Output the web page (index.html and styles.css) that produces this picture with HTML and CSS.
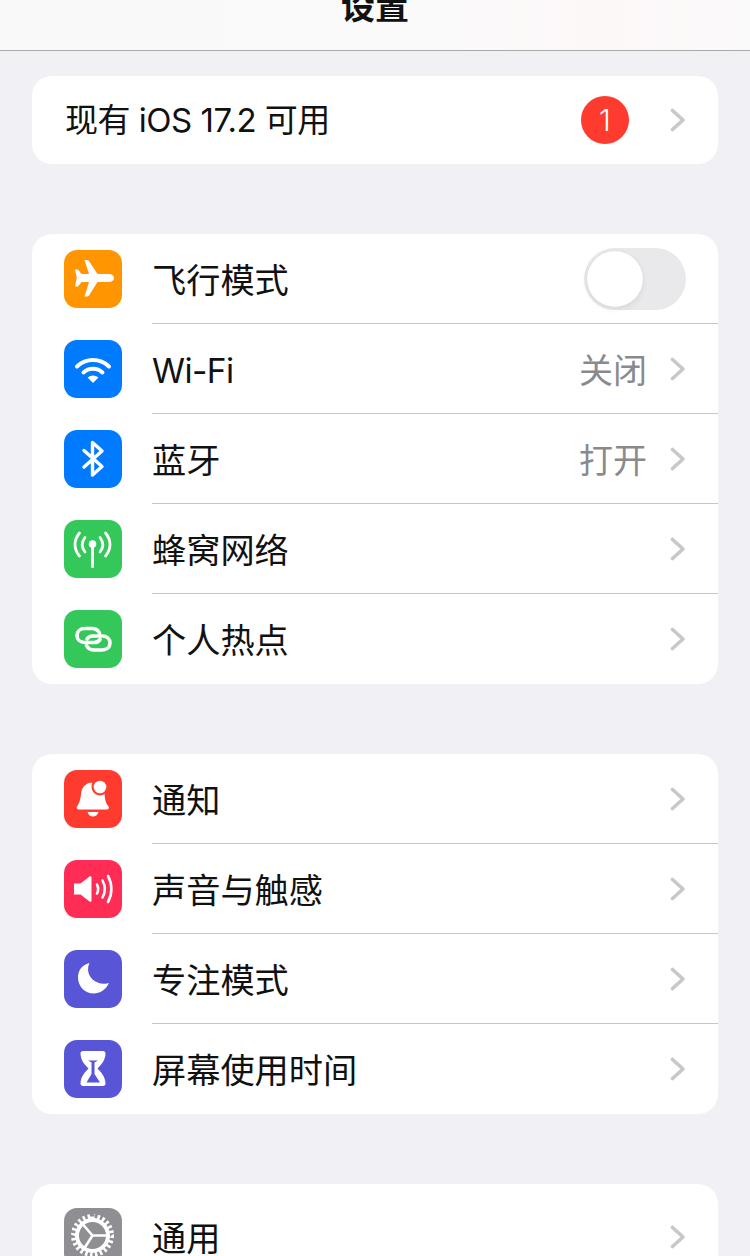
FILE: index.html
```html
<!DOCTYPE html>
<html lang="zh-CN">
<head>
<meta charset="utf-8">
<title>设置</title>
<link rel="stylesheet" href="styles.css">
</head>
<body>
<svg class="sprite" width="0" height="0" aria-hidden="true">
  <symbol id="chev" viewBox="0 0 16 24"><path d="M2.5 2.5 L13 12 L2.5 21.5" fill="none" stroke="currentColor" stroke-width="3.6" stroke-linecap="round" stroke-linejoin="round"/></symbol>
</svg>
<header class="nav"><h1 class="nav-title">设置</h1></header>
<main class="list">
  <section class="group">
    <div class="row row-update">
      <span class="label label-update">现有 iOS 17.2 可用</span>
      <span class="badge">1</span>
      <svg class="chev"><use href="#chev"/></svg>
    </div>
  </section>

  <section class="group">
    <div class="row">
      <span class="icon orange"><svg viewBox="0 0 58 58"><path fill="#fff" d="M45 24H33.500L25 11Q24.300 10 23 10H20.500L25 24H17.500L14 19.500H11L12.800 28L11 36.500H14L17.500 32H25L20.500 46.500H23Q24.300 46.500 25 45.500L33.500 32H45C48 32 50 30 50 28S48 24 45 24Z"/></svg></span>
      <div class="row-body"><span class="label">飞行模式</span><span class="switch"><span class="knob"></span></span></div>
    </div>
    <div class="row">
      <span class="icon blue"><svg viewBox="0 0 58 58"><g fill="none" stroke="#fff" stroke-width="4" stroke-linecap="round"><path d="M13 26.5A23 23 0 0 1 45 26.5"/><path d="M19.5 32.5A14 14 0 0 1 38.5 32.5"/></g><path fill="#fff" d="M23.5 37.5Q29 33.5 34.500 37.500L29 43Z"/></svg></span>
      <div class="row-body"><span class="label label-latin">Wi-Fi</span><span class="value">关闭</span><svg class="chev"><use href="#chev"/></svg></div>
    </div>
    <div class="row">
      <span class="icon blue"><svg viewBox="0 0 58 58"><path fill="none" stroke="#fff" stroke-width="3.4" stroke-linecap="round" stroke-linejoin="round" d="M20 20.500L38 36.500L28.500 45V12.500L38 21L20 37"/></svg></span>
      <div class="row-body"><span class="label">蓝牙</span><span class="value">打开</span><svg class="chev"><use href="#chev"/></svg></div>
    </div>
    <div class="row">
      <span class="icon green"><svg viewBox="0 0 58 58"><g fill="none" stroke="#fff" stroke-width="2.800" stroke-linecap="round"><path d="M15.500 13C9.500 20 9.500 29 15.500 36"/><path d="M21 17.500C17.500 22 17.500 27.500 21 32"/><path d="M41.500 13C47.500 20 47.500 29 41.500 36"/><path d="M36 17.500C39.500 22 39.500 27.500 36 32"/></g><circle cx="28.500" cy="24" r="3.800" fill="#fff"/><path d="M28.500 26V46.500" stroke="#fff" stroke-width="3" stroke-linecap="round"/></svg></span>
      <div class="row-body"><span class="label">蜂窝网络</span><svg class="chev"><use href="#chev"/></svg></div>
    </div>
    <div class="row row-last">
      <span class="icon green"><svg viewBox="0 0 58 58"><g fill="none" stroke="#fff" stroke-width="3.600" stroke-linecap="round"><path d="M35.500 23C34 20 31.500 18.500 28 18.500H21C16 18.500 13 21.500 13 25.500S16 32.500 21 32.500H30C32.500 32.500 34.800 31.500 36 29.500"/><path d="M22.500 35.500C24 38.500 26.500 40 30 40H38C43 40 46 37 46 33S43 26 38 26H29C26.500 26 24.200 27 23 29"/></g></svg></span>
      <div class="row-body"><span class="label">个人热点</span><svg class="chev"><use href="#chev"/></svg></div>
    </div>
  </section>

  <section class="group">
    <div class="row">
      <span class="icon red"><svg viewBox="0 0 58 58"><path fill="#fff" d="M27 12.500C20.500 13.500 17.500 18.500 17 24C16.500 30 15 34 13 36.500C12 38 13 39.500 14.500 39.500H43C44.500 39.500 45.500 38 44.500 36.500C42 33.500 41 30 40.500 24L40 20Z"/><path fill="#fff" d="M23.500 42H34.500C33.500 45 31.500 46.500 29 46.500S24.500 45 23.500 42Z"/><circle cx="36" cy="17" r="8.500" fill="#ff3b30"/><circle cx="36" cy="17" r="6.300" fill="#fff"/></svg></span>
      <div class="row-body"><span class="label">通知</span><svg class="chev"><use href="#chev"/></svg></div>
    </div>
    <div class="row">
      <span class="icon pink"><svg viewBox="0 0 58 58"><path fill="#fff" d="M10 23.500H16.500L25.500 16.500C26.500 15.800 27.500 16.300 27.500 17.500V40.500C27.500 41.700 26.500 42.200 25.500 41.500L16.500 34.500H10Z"/><g fill="none" stroke="#fff" stroke-width="2.600" stroke-linecap="round"><path d="M33 24.500C34.500 27.500 34.500 30.500 33 33.500"/><path d="M38.500 20.500C41.500 26 41.500 32 38.500 37.500"/><path d="M44 16C48.500 24 48.500 34 44 42"/></g></svg></span>
      <div class="row-body"><span class="label">声音与触感</span><svg class="chev"><use href="#chev"/></svg></div>
    </div>
    <div class="row">
      <span class="icon indigo"><svg viewBox="0 0 58 58"><path fill="#fff" d="M25.500 13C17.500 15 14 21 14 27.500C14 36.500 21 43.500 29.500 43.500C36 43.500 42 39.500 45 33C44 33.300 42 33.800 40 33.800C31 33.800 24 27 24 19C24 17 24.500 15 25.500 13Z"/></svg></span>
      <div class="row-body"><span class="label">专注模式</span><svg class="chev"><use href="#chev"/></svg></div>
    </div>
    <div class="row row-last">
      <span class="icon indigo"><svg viewBox="0 0 58 58"><path fill="#fff" fill-rule="evenodd" d="M19 11H39C40.500 11 41.500 12 41.500 13.500C41.500 20 37 25 33.500 28.500C37 32 41.500 37 41.500 43.500C41.500 45 40.500 46 39 46H19C17.500 46 16.500 45 16.500 43.500C16.500 37 21 32 24.500 28.500C21 25 16.500 20 16.500 13.500C16.500 12 17.500 11 19 11Z"/><path fill="#5856d6" d="M24 20.500H34L30.500 22.500V34L36 42.500H22.500L27.500 34V22.500Z"/></svg></span>
      <div class="row-body"><span class="label">屏幕使用时间</span><svg class="chev"><use href="#chev"/></svg></div>
    </div>
  </section>

  <section class="group">
    <div class="row row-last row-tall">
      <span class="icon gray"><svg viewBox="0 0 58 58"><g fill="none" stroke="#fff"><circle cx="28.500" cy="27.500" r="19" stroke-width="5" pathLength="48" stroke-dasharray="1 1"/><circle cx="28.500" cy="27.500" r="15.500" stroke-width="4"/><path stroke-width="2.600" d="M19 16.500L28.500 27.500H44M28.500 27.500L20.500 40"/></g></svg></span>
      <div class="row-body"><span class="label">通用</span><svg class="chev"><use href="#chev"/></svg></div>
    </div>
  </section>
</main>
</body>
</html>
```
FILE: styles.css
```css
* { box-sizing: border-box; }

html, body {
  margin: 0;
  height: 100vh;
  overflow: hidden;
}

body {
  background: #f0f0f5;
  color: #000;
  font-family: Inter, "Noto Sans CJK SC", sans-serif;
}

.sprite { position: absolute; }

/* Top bar: the title sits partly above the visible edge */
.nav {
  height: 51px;
  display: flex;
  justify-content: center;
  align-items: flex-end;
  overflow: hidden;
  background: linear-gradient(90deg, #f9f9fa 0%, #fbfafb 60%, #fdf8f8 80%, #fbfafb 100%);
  border-bottom: 1px solid #a9a9ac;
}

.nav-title {
  margin: 0 0 21px;
  font-size: 34px;
  line-height: 44px;
  font-weight: 700;
  color: #111;
}

.list {
  display: flex;
  flex-direction: column;
  gap: 70px;
  padding: 25px 32px 0;
}

.group {
  background: #fff;
  border-radius: 20px;
  overflow: hidden;
}

.row {
  display: flex;
  align-items: center;
  height: 90px;
}

.row-update {
  height: 88px;
  padding: 0 32px 0 33px;
}

.row-tall { height: 106px; }

.icon {
  flex: none;
  width: 58px;
  height: 58px;
  margin-left: 32px;
  border-radius: 13px;
}

.icon svg {
  display: block;
  width: 58px;
  height: 58px;
}

.orange { background: #ff9500; }
.blue { background: #007aff; }
.green { background: #34c759; }
.red { background: #ff3b30; }
.pink { background: #ff2d55; }
.indigo { background: #5856d6; }
.gray { background: #8e8e93; }

.row-body {
  flex: 1;
  align-self: stretch;
  display: flex;
  align-items: center;
  margin-left: 30px;
  padding-right: 32px;
  border-bottom: 1px solid #c6c6c8;
}

.row-last .row-body { border-bottom: 0; }

.label {
  margin-right: auto;
  padding-top: 4px;
  font-size: 34.200px;
  line-height: 44px;
  font-weight: 400;
  color: #111;
  white-space: nowrap;
}

.label-update {
  padding-top: 0;
  font-size: 33px;
  letter-spacing: -0.5px;
}

.label-latin {
  font-size: 33.500px;
  font-weight: 400;
  letter-spacing: -0.6px;
}

.value {
  padding-top: 4px;
  font-size: 34px;
  line-height: 44px;
  color: #8a8a8e;
}

.value + .chev { margin-left: 23px; }

.chev {
  flex: none;
  width: 16px;
  height: 24px;
  margin-left: 22px;
  color: #c8c8cb;
}

.badge {
  flex: none;
  width: 48px;
  height: 48px;
  margin-right: 19px;
  border-radius: 50%;
  background: #ff3b30;
  color: #fff;
  font-size: 30px;
  font-weight: 300;
  line-height: 48px;
  text-align: center;
}

.switch {
  flex: none;
  display: flex;
  align-items: center;
  width: 102px;
  height: 62px;
  padding: 0 3px;
  border-radius: 31px;
  background: #e9e9eb;
}

.knob {
  width: 56px;
  height: 56px;
  border-radius: 50%;
  background: #fff;
  box-shadow: 0 2px 6px rgba(0, 0, 0, 0.08), 0 0 1px rgba(0, 0, 0, 0.1);
}
```
